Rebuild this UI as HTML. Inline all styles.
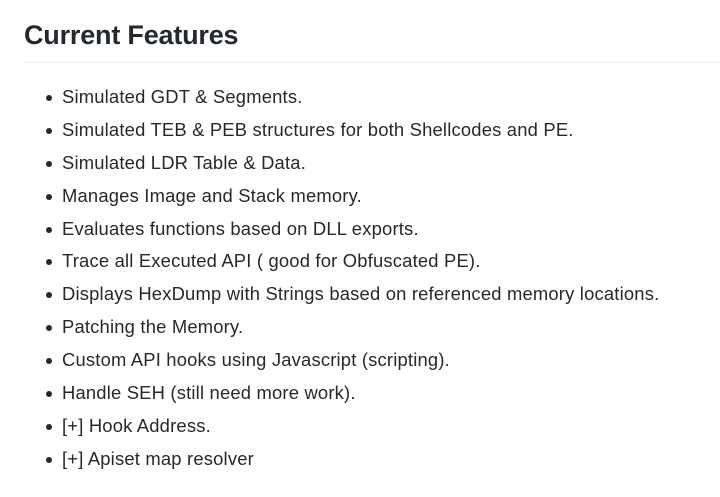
<!DOCTYPE html>
<html><head><meta charset="utf-8"><style>
html,body{margin:0;padding:0;background:#fff;width:720px;height:497px;overflow:hidden}
body{font-family:"Liberation Sans",sans-serif;color:#24292e}
h2{position:absolute;left:24px;top:16px;margin:0;font-size:27px;font-weight:bold;line-height:38px;letter-spacing:-0.2px}
.hr{position:absolute;left:24px;right:0;top:62px;height:1px;background:#eaecef}
ul{position:absolute;left:0;top:83px;margin:0;padding:0;list-style:none}
li{position:relative;height:32.9px;line-height:28px;font-size:18.4px;letter-spacing:0.19px;padding-left:62px;white-space:nowrap}
li:before{content:"";position:absolute;left:46px;top:12px;width:6px;height:6px;border-radius:50%;background:#24292e}
</style></head><body>
<h2>Current Features</h2>
<div class="hr"></div>
<ul>
<li>Simulated GDT &amp; Segments.</li>
<li>Simulated TEB &amp; PEB structures for both Shellcodes and PE.</li>
<li>Simulated LDR Table &amp; Data.</li>
<li>Manages Image and Stack memory.</li>
<li>Evaluates functions based on DLL exports.</li>
<li>Trace all Executed API ( good for Obfuscated PE).</li>
<li>Displays HexDump with Strings based on referenced memory locations.</li>
<li>Patching the Memory.</li>
<li>Custom API hooks using Javascript (scripting).</li>
<li>Handle SEH (still need more work).</li>
<li>[+] Hook Address.</li>
<li>[+] Apiset map resolver</li>
</ul>
</body></html>
